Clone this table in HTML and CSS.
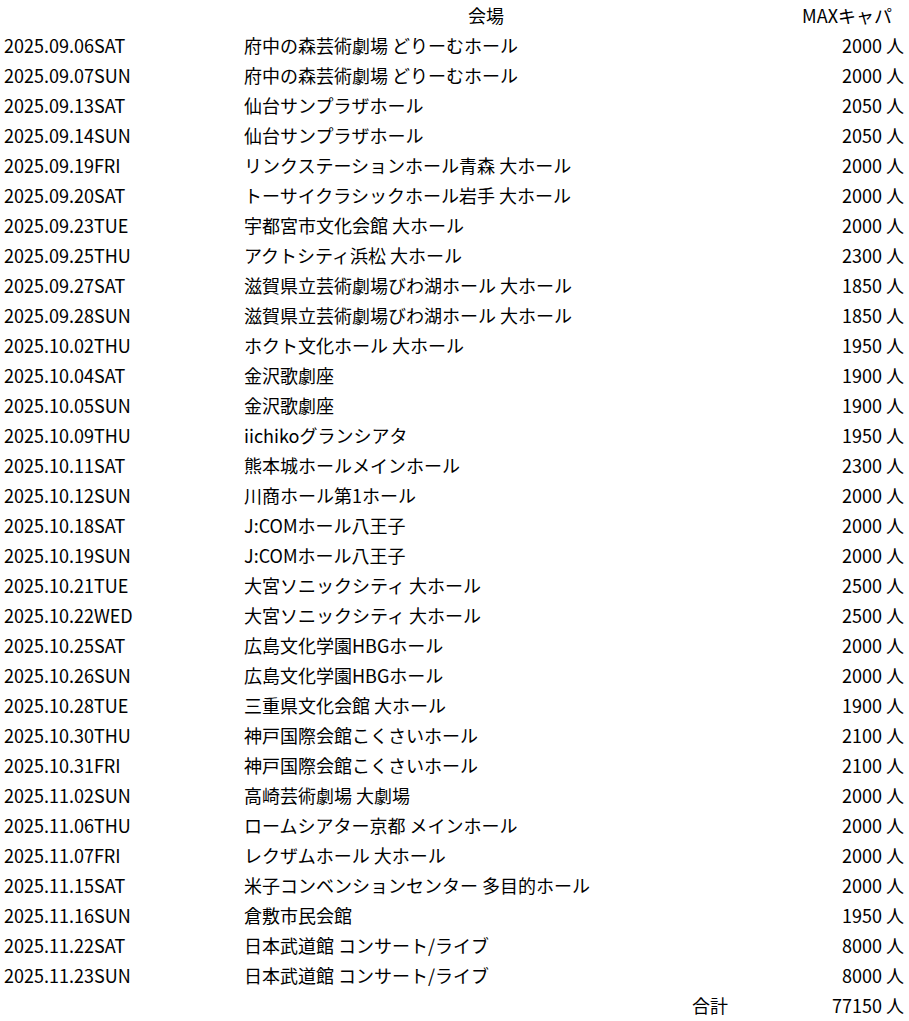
FILE: index.html
```html
<!DOCTYPE html>
<html lang="ja">
<head>
    <meta charset="UTF-8">
    <meta name="viewport" content="width=device-width, initial-scale=1.0">
    <title>会場一覧</title>
    <link rel="stylesheet" href="styles.css">
</head>
<body>
    <table class="sheet">
        <colgroup>
            <col class="col-date">
            <col class="col-venue">
            <col class="col-cap">
        </colgroup>
        <thead>
            <tr>
                <th class="date"></th>
                <th class="venue-head">会場</th>
                <th class="cap-head">MAXキャパ</th>
            </tr>
        </thead>
        <tbody>
            <tr><td class="date">2025.09.06SAT</td><td class="venue">府中の森芸術劇場 どりーむホール</td><td class="cap">2000 人</td></tr>
            <tr><td class="date">2025.09.07SUN</td><td class="venue">府中の森芸術劇場 どりーむホール</td><td class="cap">2000 人</td></tr>
            <tr><td class="date">2025.09.13SAT</td><td class="venue">仙台サンプラザホール</td><td class="cap">2050 人</td></tr>
            <tr><td class="date">2025.09.14SUN</td><td class="venue">仙台サンプラザホール</td><td class="cap">2050 人</td></tr>
            <tr><td class="date">2025.09.19FRI</td><td class="venue">リンクステーションホール青森 大ホール</td><td class="cap">2000 人</td></tr>
            <tr><td class="date">2025.09.20SAT</td><td class="venue">トーサイクラシックホール岩手 大ホール</td><td class="cap">2000 人</td></tr>
            <tr><td class="date">2025.09.23TUE</td><td class="venue">宇都宮市文化会館 大ホール</td><td class="cap">2000 人</td></tr>
            <tr><td class="date">2025.09.25THU</td><td class="venue">アクトシティ浜松 大ホール</td><td class="cap">2300 人</td></tr>
            <tr><td class="date">2025.09.27SAT</td><td class="venue">滋賀県立芸術劇場びわ湖ホール 大ホール</td><td class="cap">1850 人</td></tr>
            <tr><td class="date">2025.09.28SUN</td><td class="venue">滋賀県立芸術劇場びわ湖ホール 大ホール</td><td class="cap">1850 人</td></tr>
            <tr><td class="date">2025.10.02THU</td><td class="venue">ホクト文化ホール 大ホール</td><td class="cap">1950 人</td></tr>
            <tr><td class="date">2025.10.04SAT</td><td class="venue">金沢歌劇座</td><td class="cap">1900 人</td></tr>
            <tr><td class="date">2025.10.05SUN</td><td class="venue">金沢歌劇座</td><td class="cap">1900 人</td></tr>
            <tr><td class="date">2025.10.09THU</td><td class="venue">iichikoグランシアタ</td><td class="cap">1950 人</td></tr>
            <tr><td class="date">2025.10.11SAT</td><td class="venue">熊本城ホールメインホール</td><td class="cap">2300 人</td></tr>
            <tr><td class="date">2025.10.12SUN</td><td class="venue">川商ホール第1ホール</td><td class="cap">2000 人</td></tr>
            <tr><td class="date">2025.10.18SAT</td><td class="venue">J:COMホール八王子</td><td class="cap">2000 人</td></tr>
            <tr><td class="date">2025.10.19SUN</td><td class="venue">J:COMホール八王子</td><td class="cap">2000 人</td></tr>
            <tr><td class="date">2025.10.21TUE</td><td class="venue">大宮ソニックシティ 大ホール</td><td class="cap">2500 人</td></tr>
            <tr><td class="date">2025.10.22WED</td><td class="venue">大宮ソニックシティ 大ホール</td><td class="cap">2500 人</td></tr>
            <tr><td class="date">2025.10.25SAT</td><td class="venue">広島文化学園HBGホール</td><td class="cap">2000 人</td></tr>
            <tr><td class="date">2025.10.26SUN</td><td class="venue">広島文化学園HBGホール</td><td class="cap">2000 人</td></tr>
            <tr><td class="date">2025.10.28TUE</td><td class="venue">三重県文化会館 大ホール</td><td class="cap">1900 人</td></tr>
            <tr><td class="date">2025.10.30THU</td><td class="venue">神戸国際会館こくさいホール</td><td class="cap">2100 人</td></tr>
            <tr><td class="date">2025.10.31FRI</td><td class="venue">神戸国際会館こくさいホール</td><td class="cap">2100 人</td></tr>
            <tr><td class="date">2025.11.02SUN</td><td class="venue">高崎芸術劇場 大劇場</td><td class="cap">2000 人</td></tr>
            <tr><td class="date">2025.11.06THU</td><td class="venue">ロームシアター京都 メインホール</td><td class="cap">2000 人</td></tr>
            <tr><td class="date">2025.11.07FRI</td><td class="venue">レクザムホール 大ホール</td><td class="cap">2000 人</td></tr>
            <tr><td class="date">2025.11.15SAT</td><td class="venue">米子コンベンションセンター 多目的ホール</td><td class="cap">2000 人</td></tr>
            <tr><td class="date">2025.11.16SUN</td><td class="venue">倉敷市民会館</td><td class="cap">1950 人</td></tr>
            <tr><td class="date">2025.11.22SAT</td><td class="venue">日本武道館 コンサート/ライブ</td><td class="cap">8000 人</td></tr>
            <tr><td class="date">2025.11.23SUN</td><td class="venue">日本武道館 コンサート/ライブ</td><td class="cap">8000 人</td></tr>
        </tbody>
        <tfoot>
            <tr>
                <td class="date"></td>
                <td class="total-label">合計</td>
                <td class="cap">77150 人</td>
            </tr>
        </tfoot>
    </table>
</body>
</html>
```

FILE: styles.css
```css
body {
    margin: 0;
    background-color: #fff;
    color: #000;
    font-family: "Noto Sans CJK JP", sans-serif;
    font-size: 18px;
}

.sheet {
    width: 909px;
    border-collapse: collapse;
    table-layout: fixed;
}

.col-date {
    width: 240px;
}

.col-venue {
    width: 492px;
}

.col-cap {
    width: 177px;
}

.sheet th, .sheet td {
    height: 30px;
    padding: 0 4px;
    font-weight: normal;
    vertical-align: middle;
    white-space: nowrap;
    line-height: 30px;
}

.date, .venue {
    text-align: left;
}

.venue-head {
    text-align: center;
}

.cap-head {
    text-align: right;
    padding-right: 17px !important;
}

.cap {
    text-align: right;
    padding-right: 5px !important;
}

.total-label {
    text-align: right;
}
```
